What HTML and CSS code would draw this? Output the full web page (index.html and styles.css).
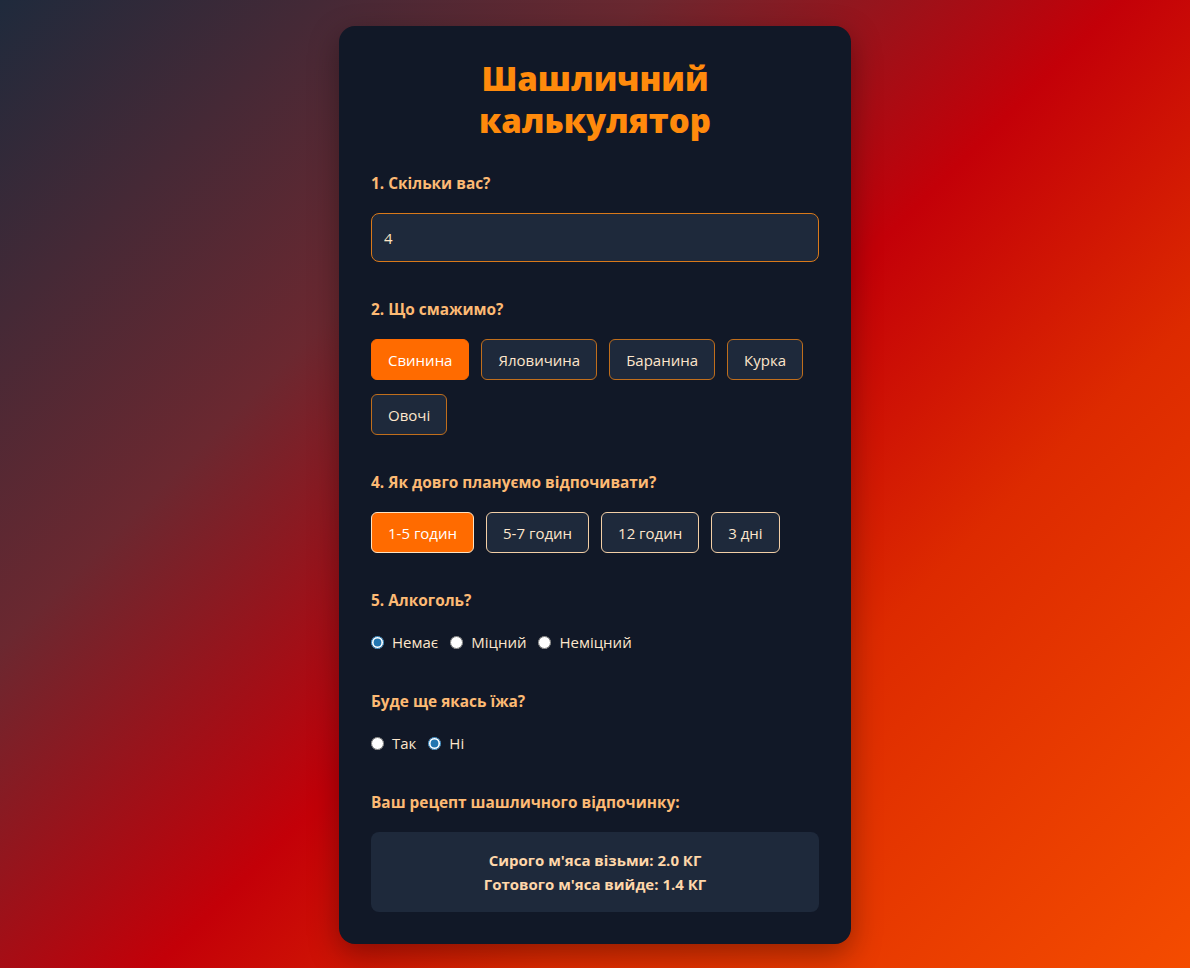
FILE: index.html
```html
<!DOCTYPE html>
<html lang="uk">
<head>
<meta charset="utf-8">
<title>Шашличний калькулятор</title>
<link rel="stylesheet" href="styles.css">
</head>
<body>
<main class="card">
  <h1 class="title">Шашличний калькулятор</h1>

  <section class="section">
    <div class="label">1. Скільки вас?</div>
    <input class="field" type="text" value="4">
  </section>

  <section class="section">
    <div class="label">2. Що смажимо?</div>
    <div class="chips">
      <button class="chip active">Свинина</button>
      <button class="chip">Яловичина</button>
      <button class="chip">Баранина</button>
      <button class="chip">Курка</button>
      <button class="chip">Овочі</button>
    </div>
  </section>

  <section class="section">
    <div class="label">4. Як довго плануємо відпочивати?</div>
    <div class="chips">
      <button class="chip light active">1-5 годин</button>
      <button class="chip light">5-7 годин</button>
      <button class="chip light">12 годин</button>
      <button class="chip light">3 дні</button>
    </div>
  </section>

  <section class="section">
    <div class="label">5. Алкоголь?</div>
    <div class="radios">
      <label class="radio"><input type="radio" name="alc" checked>Немає</label>
      <label class="radio"><input type="radio" name="alc">Міцний</label>
      <label class="radio"><input type="radio" name="alc">Неміцний</label>
    </div>
  </section>

  <section class="section">
    <div class="label">Буде ще якась їжа?</div>
    <div class="radios">
      <label class="radio"><input type="radio" name="food">Так</label>
      <label class="radio"><input type="radio" name="food" checked>Ні</label>
    </div>
  </section>

  <section class="section last">
    <div class="label">Ваш рецепт шашличного відпочинку:</div>
    <div class="result">
      <div>Сирого м'яса візьми: 2.0 КГ</div>
      <div>Готового м'яса вийде: 1.4 КГ</div>
    </div>
  </section>
</main>
</body>
</html>
```
FILE: styles.css
```css
* { box-sizing: border-box; }
html, body { margin: 0; }
body {
  min-height: 968px;
  background: linear-gradient(135deg, #1f2a3c 0%, #6b2830 30%, #c30008 52%, #dd2a00 70%, #f44c00 100%);
  font-family: "Open Sans", "Noto Sans", sans-serif;
  display: flex;
  justify-content: center;
  align-items: flex-start;
  padding-top: 26px;
}
.card {
  width: 512px;
  background: #111827;
  border-radius: 16px;
  padding: 32px;
  box-shadow: 0 10px 30px rgba(0,0,0,0.35);
}
.title {
  margin: 0 0 30px;
  text-align: center;
  color: #ff8a0c;
  font-family: "Open Sans", "Noto Sans", sans-serif;
  font-weight: 800;
  font-size: 33px;
  line-height: 42px;
  padding: 0 80px;
}
.section { margin-bottom: 36px; }
.section.last { margin-bottom: 0; }
.label {
  color: #fdba74;
  font-weight: 700;
  font-size: 15.4px;
  line-height: 24px;
  margin-bottom: 17px;
}
.field {
  display: block;
  width: 100%;
  height: 49px;
  background: #1e293b;
  border: 1px solid #d9791a;
  border-radius: 8px;
  padding: 0 12px;
  color: #fde5c4;
  font-family: inherit;
  font-size: 15px;
  outline: none;
}
.chips {
  display: flex;
  flex-wrap: wrap;
  gap: 14px 12px;
}
.chip {
  height: 41px;
  padding: 0 16px;
  background: #1e293b;
  border: 1px solid #c06e1c;
  border-radius: 6px;
  color: #fde6cc;
  font-family: inherit;
  font-size: 15px;
}
.chip.light { border-color: #f3cfa6; }
.chip.active {
  background: #ff6b00;
  border-color: #ff6b00;
  color: #ffffff;
}
.chip.light.active { border-color: #fde3c2; }
.radios {
  display: flex;
  align-items: center;
  height: 24px;
}
.radio {
  display: inline-flex;
  align-items: center;
  gap: 8px;
  margin-right: 12px;
  color: #fde6cc;
  font-size: 15px;
}
.radio input {
  margin: 0;
  width: 13px;
  height: 13px;
  accent-color: #2376b0;
}
.result {
  background: #1e293b;
  border-radius: 8px;
  padding: 16px;
  text-align: center;
  color: #fed7aa;
  font-weight: 700;
  font-size: 15px;
  line-height: 24px;
}
```
